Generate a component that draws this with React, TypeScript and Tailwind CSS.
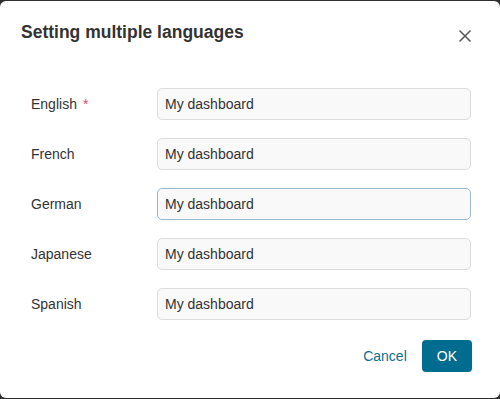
import React from "react";

const rows: { label: string; required?: boolean; focused?: boolean }[] = [
  { label: "English", required: true },
  { label: "French" },
  { label: "German", focused: true },
  { label: "Japanese" },
  { label: "Spanish" },
];

export default function App() {
  return (
    <div className="h-[399px] w-[500px] bg-[#2e2e2e] pt-px" style={{ fontFamily: '"Liberation Sans", Arial, sans-serif' }}>
      <div className="relative h-[397px] w-[500px] rounded-[6px] bg-white text-[#333]">
        <div className="pl-[21px] pt-[21px]">
          <h2 className="text-[17.5px] font-bold leading-[21px] text-[#333]">Setting multiple languages</h2>
        </div>
        <button className="absolute left-[457px] top-[27px] flex h-[16px] w-[16px] items-center justify-center text-[#555]" aria-label="Close">
          <svg width="14" height="14" viewBox="0 0 14 14" fill="none" stroke="currentColor" strokeWidth="1.5">
            <path d="M1.5 1.5 L12.5 12.5 M12.5 1.5 L1.5 12.5" />
          </svg>
        </button>
        <div className="mt-[45px] flex flex-col gap-[18px] pl-[31px] pr-[29px]">
          {rows.map((r) => (
            <div key={r.label} className="flex items-center">
              <label className="flex w-[126px] items-center text-[14px] text-[#333]">
                {r.label}
                {r.required && <span className="ml-[6px] text-[#e2476b]">*</span>}
              </label>
              <input
                readOnly
                value="My dashboard"
                className={`h-[32px] w-[314px] rounded-[5px] border bg-[#f9f9f9] px-[7px] text-[14px] text-[#333] outline-none ${
                  r.focused ? "border-[#9db9cb]" : "border-[#dcdcdc]"
                }`}
                style={{ fontFamily: '"Liberation Sans", Arial, sans-serif' }}
              />
            </div>
          ))}
        </div>
        <div className="mt-[20px] flex items-center justify-end gap-[15px] pr-[28px]">
          <button className="text-[14px] text-[#0b6e93]">Cancel</button>
          <button className="h-[32px] rounded-[4px] bg-[#006c8f] px-[15px] text-[14px] text-white">OK</button>
        </div>
      </div>
    </div>
  );
}
